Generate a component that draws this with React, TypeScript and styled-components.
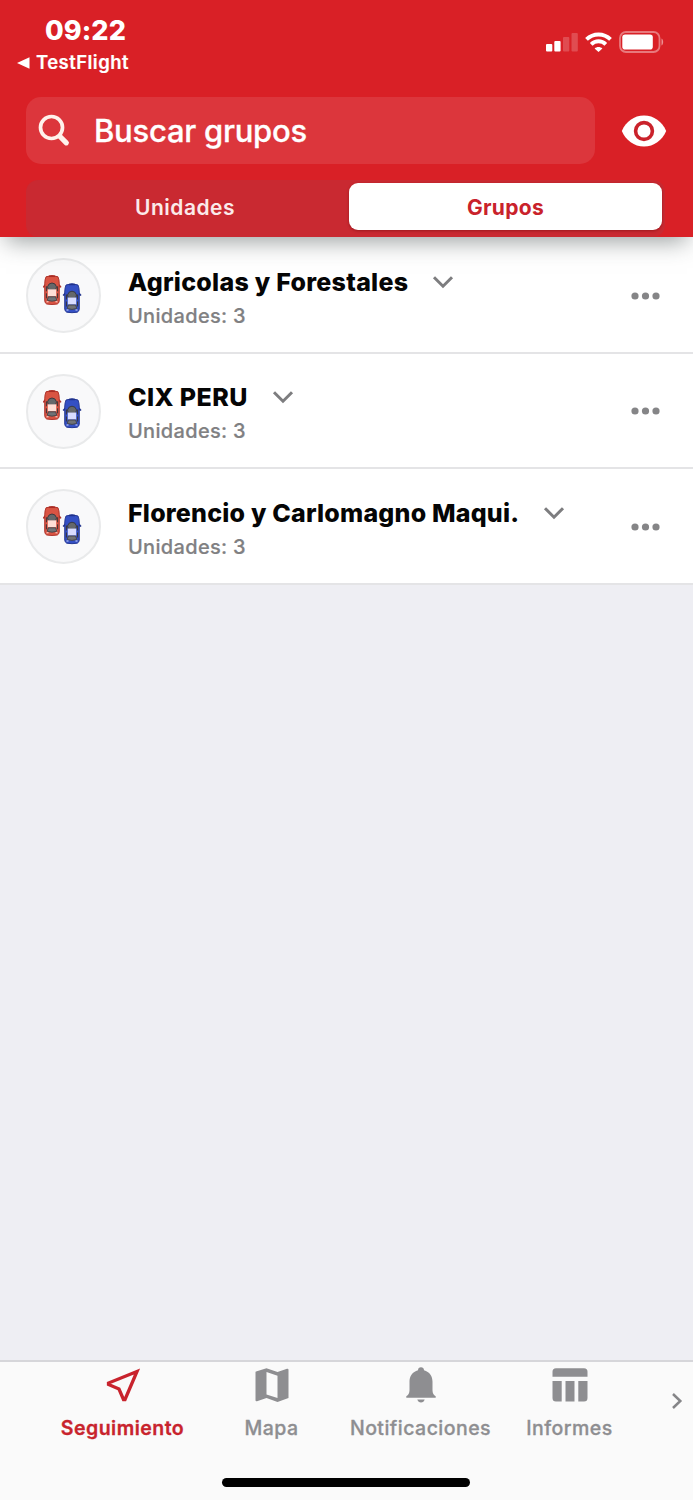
import React from "react";
import styled, { createGlobalStyle } from "styled-components";

const GlobalStyle = createGlobalStyle`
  * { box-sizing: border-box; }
  body { margin: 0; background: #eeeef3; font-family: Inter, "Liberation Sans", sans-serif; }
`;

const Screen = styled.div`
  display: flex;
  flex-direction: column;
  width: 693px;
  height: 1500px;
  overflow: hidden;
  background: #eeeef3;
`;

const Header = styled.header`
  display: flex;
  flex-direction: column;
  height: 237px;
  flex: none;
  background: #d92026;
  color: #fff;
  z-index: 1;
  box-shadow: 0 10px 22px -6px rgba(50, 60, 60, 0.5);
`;

const StatusBar = styled.div`
  display: flex;
  justify-content: space-between;
  height: 97px;
  padding: 15px 29px 0 17px;
`;

const StatusLeft = styled.div`
  display: flex;
  flex-direction: column;
  gap: 4px;
`;

const Clock = styled.div`
  padding-left: 28px;
  font-size: 27px;
  line-height: 32px;
  font-weight: 800;
  letter-spacing: 0.1px;
`;

const BackLink = styled.div`
  display: flex;
  align-items: center;
  gap: 6px;
  font-size: 18.5px;
  line-height: 23px;
  font-weight: 600;
  letter-spacing: 0.45px;
  -webkit-text-stroke: 0.2px currentColor;
`;

const StatusIcons = styled.div`
  display: flex;
  align-items: center;
  gap: 7px;
  height: 24px;
  margin-top: 15px;
`;

const SearchRow = styled.div`
  display: flex;
  align-items: center;
  justify-content: space-between;
  padding: 0 26px;
`;

const SearchField = styled.div`
  display: flex;
  align-items: center;
  gap: 23px;
  width: 569px;
  height: 67px;
  padding: 0 12px;
  border-radius: 15px;
  background: #dc363c;
  font-size: 31px;
  font-weight: 500;
  line-height: 38px;
  letter-spacing: -0.25px;
  -webkit-text-stroke: 0.3px currentColor;
`;

const Segments = styled.div`
  display: flex;
  margin: 16px 28px 0 26px;
  height: 57px;
  padding: 3px 3px 7px;
  border-radius: 12px;
  background: #c92931;
`;

const Segment = styled.div<{ $active?: boolean }>`
  display: flex;
  align-items: center;
  justify-content: center;
  flex: ${(p) => (p.$active ? "0 0 313px" : "1")};
  padding: ${(p) => (p.$active ? "1px 0 0" : "1px 8px 0 0")};
  border-radius: 9px;
  background: ${(p) => (p.$active ? "#fff" : "transparent")};
  color: ${(p) => (p.$active ? "#c9222b" : "#fbeaea")};
  font-size: 21px;
  font-weight: ${(p) => (p.$active ? 750 : 600)};
  letter-spacing: ${(p) => (p.$active ? "0.3px" : "0.5px")};
  box-shadow: ${(p) => (p.$active ? "0 1px 3px rgba(90, 0, 0, 0.4)" : "none")};
`;

const List = styled.main`
  display: flex;
  flex-direction: column;
  flex: 1;
`;

const Row = styled.div`
  display: flex;
  align-items: center;
  height: 115.5px;
  padding: 2px 33px 0 26px;
  background: #fff;
  border-bottom: 2px solid #e4e4e6;

  &:first-child {
    height: 116.5px;
    padding-top: 3px;
  }
`;

const Avatar = styled.div`
  display: flex;
  align-items: center;
  justify-content: center;
  width: 75px;
  height: 75px;
  margin-right: 27px;
  padding: 0 2px 2px 0;
  border: 2px solid #e9eaeb;
  border-radius: 50%;
  background: #f9f9fa;
`;

const RowText = styled.div`
  display: flex;
  flex-direction: column;
  flex: 1;
  gap: 6px;
  padding-top: 5px;
`;

const RowTitle = styled.div<{ $spacing: number }>`
  display: flex;
  align-items: center;
  gap: 24px;
  color: #050505;
  font-size: 25px;
  line-height: 30px;
  font-weight: 800;
  letter-spacing: ${(p) => p.$spacing}px;
`;

const RowSub = styled.div`
  color: #808082;
  font-size: 20px;
  line-height: 27px;
  font-weight: 500;
  letter-spacing: 0.32px;
  -webkit-text-stroke: 0.2px currentColor;
`;

const TabBar = styled.nav`
  display: flex;
  flex-direction: column;
  justify-content: space-between;
  align-items: center;
  height: 140px;
  flex: none;
  padding: 0 2px 13px 0;
  border-top: 2px solid #d6d6da;
  background: #fafafa;
`;

const Tabs = styled.div`
  display: flex;
  align-items: flex-start;
  width: 100%;
  padding-left: 48px;
`;

const Tab = styled.div<{ $active?: boolean }>`
  display: flex;
  flex-direction: column;
  align-items: center;
  flex: none;
  gap: 11px;
  width: 149px;
  padding-top: 5px;
  color: ${(p) => (p.$active ? "#c8232d" : "#8e8e91")};
  font-size: 19.5px;
  line-height: 28px;
  font-weight: ${(p) => (p.$active ? 600 : 500)};
  letter-spacing: 0.47px;
  -webkit-text-stroke: 0.3px currentColor;
`;

const MoreTabs = styled.div`
  padding: 30px 0 0 27px;
  color: #858588;
`;

const HomeIndicator = styled.div`
  width: 248px;
  height: 9px;
  border-radius: 5px;
  background: #000;
`;

const BackArrow = () => (
  <svg width="13" height="12" viewBox="0 0 13 12"><path d="M0 6 12.5 0.3V11.7Z" fill="#fff" /></svg>
);

const Signal = () => (
  <svg width="32" height="20" viewBox="0 0 32 20" fill="#fff">
    <rect x="0" y="12" width="6.3" height="7.5" rx="1" />
    <rect x="8.3" y="9" width="6.3" height="10.5" rx="1" />
    <rect x="17" y="5" width="6.3" height="14.5" rx="1" opacity=".2" />
    <rect x="25.5" y="1" width="6.3" height="18.5" rx="1" opacity=".2" />
  </svg>
);

const Wifi = () => (
  <svg width="27" height="20" viewBox="0 0 27 20" fill="none" stroke="#fff" strokeWidth="3.9">
    <path d="M1.5 7.4C8.3.8 18.7.8 25.5 7.4" />
    <path d="M6.2 12.3c4.2-4 10.4-4 14.6 0" />
    <path d="M13.5 20 9.6 16.4c2.2-2 5.6-2 7.8 0Z" fill="#fff" stroke="none" />
  </svg>
);

const Battery = () => (
  <svg width="45" height="22" viewBox="0 0 45 22">
    <rect x="1" y="1" width="39.5" height="20" rx="6" fill="none" stroke="#fff" strokeOpacity=".4" strokeWidth="1.8" />
    <rect x="3.3" y="3.5" width="30.5" height="15" rx="2.8" fill="#fff" />
    <path d="M42.5 7.5c2.2 1.2 2.2 5.800 0 7Z" fill="#fff" opacity=".5" />
  </svg>
);

const SearchIcon = () => (
  <svg width="33" height="34" viewBox="0 0 33 34" fill="none" stroke="#fff2ec" strokeLinecap="round">
    <circle cx="13.5" cy="13.5" r="11" strokeWidth="3.7" />
    <path d="m22 22.500 6.300 6.300" strokeWidth="5.2" />
  </svg>
);

const EyeIcon = () => (
  <svg width="46" height="32" viewBox="0 0 46 32">
    <path d="M.8 16C5 6.5 13 .5 23 .5S41 6.5 45.2 16C41 25.5 33 31.5 23 31.5S5 25.5.8 16Z" fill="#fff" />
    <circle cx="23" cy="16" r="8.4" fill="none" stroke="#ca222b" strokeWidth="3.6" />
  </svg>
);

const Car = ({ x, y, body, edge, glass }: { x: number; y: number; body: string; edge: string; glass: string }) => (
  <g transform={`translate(${x} ${y})`}>
    <path d="M1.5 9.5-.2 11v1l2-.7M15.5 9.5l1.9 1.5v1l-2-.7" fill={edge} stroke={edge} strokeWidth=".8" />
    <path d="M2.5 1.5Q8.5-1 14.5 1.5q1.300 3 1.300 7v17q-.3 2.500-2 3.200-5.300 1-10.600 0-1.700-.7-2-3.200v-17q0-4 1.300-7Z" fill={body} stroke={edge} strokeWidth=".9" />
    <path d="M5.5 1h6" stroke={edge} strokeWidth="1.5" />
    <path d="M4 11.5Q5 7.7 8.5 7.7T13 11.5l-.8 3H4.8Z" fill="#65686b" stroke="#34363c" strokeWidth=".9" />
    <rect x="4.3" y="14" width="8.4" height="7" fill={glass} />
    <path d="M4.8 21.5h7.4l1 3.5q-4.7 1.8-9.4 0Z" fill="#707276" stroke="#3c3e42" strokeWidth=".8" />
    <path d="M2.9 11v5M14.1 11v5M2.9 18v5M14.1 18v5" stroke="#3a3537" strokeWidth="1" />
    <path d="M3 26.5h2M12 26.5h2" stroke={glass} strokeWidth="1" />
  </g>
);

const CarsIcon = () => (
  <svg width="40" height="40" viewBox="0 0 40 40">
    <Car x={0.5} y={0.3} body="#d95443" edge="#a92b24" glass="#ffded6" />
    <Car x={20.5} y={8.5} body="#3450c4" edge="#20328c" glass="#d8dcff" />
  </svg>
);

const ChevronDown = () => (
  <svg width="22" height="14" viewBox="0 0 22 14"><path d="m2 2.2 9 9 9-9" fill="none" stroke="#7d7d7f" strokeWidth="3" /></svg>
);

const ChevronRight = () => (
  <svg width="12" height="18" viewBox="0 0 12 18"><path d="m2 2 7.3 7L2 16" fill="none" stroke="currentColor" strokeWidth="2.5" /></svg>
);

const Dots = () => (
  <svg width="29" height="8" viewBox="0 0 29 8" fill="#858587">
    <circle cx="4" cy="4" r="3.6" /><circle cx="14.5" cy="4" r="3.6" /><circle cx="25" cy="4" r="3.6" />
  </svg>
);

const TrackIcon = () => (
  <svg width="36" height="36" viewBox="0 0 36 36"><path d="M32 4.5 3.5 16v1.500l10.500 4.500 4.500 10.500h1.500Z" fill="none" stroke="currentColor" strokeWidth="3.3" /></svg>
);

const MapIcon = () => (
  <svg width="36" height="36" viewBox="0 0 36 36">
    <path d="M2 4.5 12.5 1.2 23.5 5 33 1.7q1.5-.3 1.5 1V31L23.5 35 12.5 31 3 34.3q-1.5.3-1.5-1V5.3q0-.6.5-.8ZM12.5 5v22.5L23.5 31V8.7Z" fill="currentColor" fillRule="evenodd" />
  </svg>
);

const BellIcon = () => (
  <svg width="32" height="36" viewBox="0 0 32 36" fill="currentColor">
    <path d="M16 .3c1.8 0 3 1.2 3 3 5.5 1.5 8.5 6 8.5 11.5v8.5c0 3 1.2 4.8 3.2 6v1.4H1.3v-1.4c2-1.2 3.2-3 3.2-6v-8.5C4.5 9.3 7.5 4.8 13 3.3c0-1.8 1.2-3 3-3Z" />
    <path d="M12.3 32.5h7.4c-.6 2-1.9 3-3.7 3s-3.1-1-3.7-3Z" />
  </svg>
);

const ReportIcon = () => (
  <svg width="36" height="36" viewBox="0 0 36 36" fill="currentColor">
    <path d="M4 1.2h28q3.5 0 3.5 3.5v5H.5v-5q0-3.5 3.5-3.5ZM.5 14h9.2v20.5H4Q.5 34.5.5 31ZM13.5 14h9v20.5h-9ZM26.300 14h9.200v17q0 3.500-3.500 3.500h-5.700Z" />
  </svg>
);

const groups = [
  { name: "Agricolas y Forestales", spacing: 0.27 },
  { name: "CIX PERU", spacing: 0.4 },
  { name: "Florencio y Carlomagno Maqui.", spacing: 0.21 },
];

export default function App() {
  return (
    <Screen>
      <GlobalStyle />
      <Header>
        <StatusBar>
          <StatusLeft>
            <Clock>09:22</Clock>
            <BackLink><BackArrow />TestFlight</BackLink>
          </StatusLeft>
          <StatusIcons><Signal /><Wifi /><Battery /></StatusIcons>
        </StatusBar>
        <SearchRow>
          <SearchField><SearchIcon />Buscar grupos</SearchField>
          <EyeIcon />
        </SearchRow>
        <Segments>
          <Segment>Unidades</Segment>
          <Segment $active>Grupos</Segment>
        </Segments>
      </Header>
      <List>
        {groups.map((g) => (
          <Row key={g.name}>
            <Avatar><CarsIcon /></Avatar>
            <RowText>
              <RowTitle $spacing={g.spacing}>{g.name}<ChevronDown /></RowTitle>
              <RowSub>Unidades: 3</RowSub>
            </RowText>
            <Dots />
          </Row>
        ))}
      </List>
      <TabBar>
        <Tabs>
          <Tab $active><TrackIcon />Seguimiento</Tab>
          <Tab><MapIcon />Mapa</Tab>
          <Tab><BellIcon />Notificaciones</Tab>
          <Tab><ReportIcon />Informes</Tab>
          <MoreTabs><ChevronRight /></MoreTabs>
        </Tabs>
        <HomeIndicator />
      </TabBar>
    </Screen>
  );
}
